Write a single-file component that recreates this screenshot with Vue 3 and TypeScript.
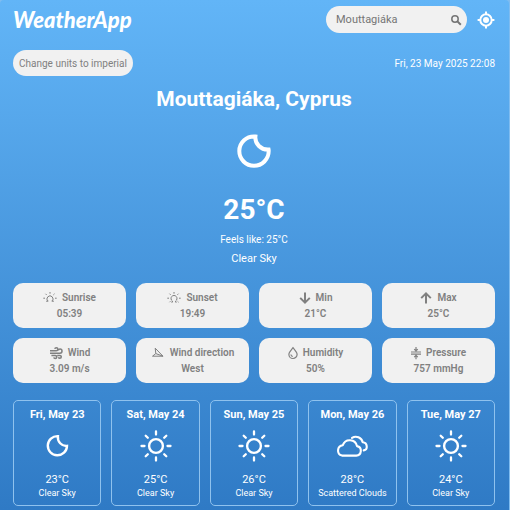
<script setup lang="ts">
import { ref } from 'vue'

type Glyph = 'sunrise' | 'sunset' | 'down' | 'up' | 'wind' | 'direction' | 'drop' | 'pressure'
type Sky = 'moon' | 'sun' | 'clouds'

interface Detail {
  icon: Glyph
  label: string
  value: string
}

interface Day {
  date: string
  sky: Sky
  temp: string
  text: string
}

const query = ref('Mouttagiáka')

const details: Detail[] = [
  { icon: 'sunrise', label: 'Sunrise', value: '05:39' },
  { icon: 'sunset', label: 'Sunset', value: '19:49' },
  { icon: 'down', label: 'Min', value: '21°C' },
  { icon: 'up', label: 'Max', value: '25°C' },
  { icon: 'wind', label: 'Wind', value: '3.09 m/s' },
  { icon: 'direction', label: 'Wind direction', value: 'West' },
  { icon: 'drop', label: 'Humidity', value: '50%' },
  { icon: 'pressure', label: 'Pressure', value: '757 mmHg' },
]

const days: Day[] = [
  { date: 'Fri, May 23', sky: 'moon', temp: '23°C', text: 'Clear Sky' },
  { date: 'Sat, May 24', sky: 'sun', temp: '25°C', text: 'Clear Sky' },
  { date: 'Sun, May 25', sky: 'sun', temp: '26°C', text: 'Clear Sky' },
  { date: 'Mon, May 26', sky: 'clouds', temp: '28°C', text: 'Scattered Clouds' },
  { date: 'Tue, May 27', sky: 'sun', temp: '24°C', text: 'Clear Sky' },
]
</script>

<template>
  <div class="app">
    <header class="top">
      <a class="logo" href="#">WeatherApp</a>
      <form class="search" role="search" @submit.prevent>
        <input v-model="query" type="text" aria-label="City" />
        <button type="submit" aria-label="Search">
          <svg viewBox="0 0 12 12" width="12" height="12" class="line">
            <circle cx="5" cy="5" r="3.2" stroke-width="1.5" />
            <path d="M7.4 7.4 10.8 10.8" stroke-width="2" />
          </svg>
        </button>
      </form>
      <button class="locate" type="button" aria-label="Use my location">
        <svg viewBox="0 0 18 18" width="18" height="18" class="line">
          <circle cx="9" cy="9" r="5.7" stroke-width="2" />
          <circle cx="9" cy="9" r="3" fill="currentColor" stroke="none" />
          <path d="M9 .6v3M9 14.4v3M.6 9h3M14.4 9h3" stroke-width="2" />
        </svg>
      </button>
    </header>

    <div class="bar">
      <button class="units" type="button">Change units to imperial</button>
      <time datetime="2025-05-23T22:08">Fri, 23 May 2025 22:08</time>
    </div>

    <main>
      <section class="current">
        <h1>Mouttagiáka, Cyprus</h1>
        <svg class="line now" viewBox="0 0 34 34" width="34" height="34">
          <path
            d="M18.4 2.5C9.6 1.7 2.3 8.4 2.3 17.1a14.7 14.7 0 0 0 29.4 0c0-.5 0-1-.1-1.5C24 16 17.7 10 18.4 2.5Z"
            stroke-width="4"
          />
        </svg>
        <p class="temp">25°C</p>
        <p class="feels">Feels like: 25°C</p>
        <p class="summary">Clear Sky</p>
      </section>

      <section class="details">
        <article v-for="item in details" :key="item.label" class="card">
          <h2>
            <svg v-if="item.icon === 'sunrise'" class="line" viewBox="0 0 14 14" width="14" height="14">
              <path d="M3.1 10.2h2a3 3 0 1 1 3.8 0h2M.3 7.2H2M12 7.2h1.7M7 1v1.7M2.5 2.8l1.1 1.1M11.5 2.8l-1.1 1.1" />
            </svg>
            <svg v-else-if="item.icon === 'sunset'" class="line" viewBox="0 0 14 14" width="14" height="14">
              <path d="M4.4 11.2h1V10a3 3 0 1 1 3.2 0v1.2h1M.3 7.2H2M12 7.2h1.7M7 1v1.7M2.5 2.7l1.1 1.1M11.5 2.7l-1.1 1.1M3.4 10.3l-.9.9M10.6 10.3l.9.9" />
            </svg>
            <svg v-else-if="item.icon === 'down'" class="line bold" viewBox="0 0 12 14" width="12" height="14">
              <path d="M6 1.5v10M1.2 6.9 6 11.7l4.8-4.8" />
            </svg>
            <svg v-else-if="item.icon === 'up'" class="line bold" viewBox="0 0 12 14" width="12" height="14">
              <path d="M6 12.5v-10M1.2 7.1 6 2.3l4.8 4.8" />
            </svg>
            <svg v-else-if="item.icon === 'wind'" class="line" viewBox="0 0 14 14" width="14" height="14">
              <path d="M1 4.8h6.3c2.1 0 2.1-3.1 0-3.1-.8 0-1.4.5-1.5 1.2M1 7.2h10c2.7 0 2.7-4.3 0-4.3-1 0-1.6.7-1.6 1.6M2.4 9.6h3.8c2 0 2 2.9 0 2.9-.8 0-1.3-.5-1.4-1.1M8.2 9.4h2.6c2 0 2 2.9 0 2.9-.7 0-1.2-.4-1.4-1" stroke-width="1.5" />
            </svg>
            <svg v-else-if="item.icon === 'direction'" class="line" viewBox="0 0 14 14" width="14" height="14">
              <path d="M4.2 2.2 12 10.2H1.5l3.3-2.6ZM4.8 7.6l7.2 2.6" />
            </svg>
            <svg v-else-if="item.icon === 'drop'" class="line" viewBox="0 0 10 14" width="10" height="14">
              <path d="M5 1.7C3.5 3.8.9 6.2.9 8.4a4.1 4.1 0 0 0 8.2 0C9.1 6.2 6.5 3.8 5 1.7ZM2.9 8.5c.1 1.1.8 1.8 1.9 2" stroke-width="1.2" />
            </svg>
            <svg v-else class="line" viewBox="0 0 10 14" width="10" height="14">
              <path d="M0 6h10M0 8.2h10M5 1v3.8M3.2 3.1 5 4.9l1.8-1.8M5 13.2V9.4M3.2 11.1 5 9.3l1.8 1.8" stroke-width="1.2" />
            </svg>
            {{ item.label }}
          </h2>
          <p>{{ item.value }}</p>
        </article>
      </section>

      <section class="forecast">
        <article v-for="day in days" :key="day.date" class="day">
          <h3>{{ day.date }}</h3>
          <svg v-if="day.sky === 'moon'" class="line" viewBox="0 0 34 34" width="34" height="34">
            <path
              d="M17.9 7.1a9.6 9.6 0 1 0 9.1 9.8c-5.4.5-9.8-4.2-9.1-9.8Z"
              stroke-width="2.4"
            />
          </svg>
          <svg v-else-if="day.sky === 'sun'" class="line round" viewBox="0 0 34 34" width="34" height="34">
            <circle cx="17" cy="17" r="6.9" stroke-width="2.4" />
            <path
              d="M17 2.5v3M17 28.5v3M2.5 17h3M28.5 17h3M6.7 6.7l2.1 2.1M25.2 25.2l2.1 2.1M6.7 27.3l2.1-2.1M25.2 8.8l2.1-2.1"
              stroke-width="2.3"
            />
          </svg>
          <svg v-else class="line round" viewBox="0 0 34 34" width="34" height="34">
            <path
              d="M7 26.6h14.2a4.8 4.8 0 0 0 .8-9.5 7.4 7.4 0 0 0-14.2-.9A5.3 5.3 0 0 0 7 26.6ZM17 8.9a7 7 0 0 1 10.7 4.3c4.8.3 5.6 7.3 1 8.2"
              stroke-width="2.1"
            />
          </svg>
          <p class="degrees">{{ day.temp }}</p>
          <p class="text">{{ day.text }}</p>
        </article>
      </section>
    </main>
  </div>
</template>

<style>
body {
  margin: 0;
  background: #7fbcf0;
}
</style>

<style scoped>
.app {
  box-sizing: border-box;
  min-height: 100vh;
  margin-right: 1px;
  padding: 6px 14px 4px 13px;
  border-radius: 4px 4px 0 0;
  background: linear-gradient(#62b5f7, #2f7ac5);
  color: #fff;
  font-family: Roboto, 'Liberation Sans', sans-serif;
}

h1,
h2,
h3,
p {
  margin: 0;
}

button,
input {
  padding: 0;
  border: 0;
  background: none;
  color: inherit;
  font: inherit;
}

svg {
  display: block;
}

.line {
  fill: none;
  stroke: currentColor;
  stroke-width: 1;
}

.bold {
  stroke-width: 2;
}

.round {
  stroke-linecap: round;
  stroke-linejoin: round;
}

.top {
  display: flex;
  align-items: center;
  height: 27px;
}

.logo {
  margin-right: auto;
  color: #fff;
  font: italic 900 22px/27px Lato, sans-serif;
  text-decoration: none;
}

.search {
  box-sizing: border-box;
  display: flex;
  align-items: center;
  width: 141px;
  height: 27px;
  padding: 0 5px 0 10px;
  border-radius: 14px;
  background: #f1f1f1;
  color: #757575;
  font-size: 11px;
}

.search input {
  flex: 1;
  min-width: 0;
  outline: 0;
}

.locate {
  margin-left: 10px;
}

.bar {
  display: flex;
  align-items: center;
  justify-content: space-between;
  margin-top: 17px;
  font-size: 10px;
}

.units {
  height: 26px;
  padding: 0 6px;
  border-radius: 13px;
  background: #f1f1f1;
  color: #808080;
}

.current {
  display: flex;
  flex-direction: column;
  align-items: center;
}

h1 {
  margin-top: 10px;
  font-size: 21px;
  line-height: 26px;
}

.now {
  margin-top: 22px;
}

.temp {
  margin-top: 24px;
  font-size: 28px;
  font-weight: 700;
  line-height: 36px;
}

.feels {
  margin-top: 5px;
  font-size: 10px;
  line-height: 14px;
}

.summary {
  margin-top: 5px;
  font-size: 11px;
  line-height: 14px;
}

.details {
  display: grid;
  grid-template-columns: repeat(4, 1fr);
  gap: 10px;
  margin-top: 17px;
}

.card {
  padding: 7px 0 6px;
  border-radius: 10px;
  background: #f1f1f1;
  color: #808080;
  font-size: 10px;
  font-weight: 600;
  line-height: 16px;
  text-align: center;
}

.card h2 {
  display: flex;
  align-items: center;
  justify-content: center;
  gap: 5px;
  font: inherit;
}

.forecast {
  display: grid;
  grid-template-columns: repeat(5, 1fr);
  gap: 10px;
  margin-top: 17px;
}

.day {
  display: flex;
  flex-direction: column;
  align-items: center;
  padding: 7px 0 5px;
  border: 1px solid #8fc2ee;
  border-radius: 5px;
}

.day h3 {
  margin-bottom: 7px;
  font-size: 11px;
  line-height: 14px;
}

.degrees {
  margin-top: 10px;
  font-size: 11px;
  line-height: 14px;
}

.text {
  font-size: 9px;
  line-height: 13px;
}
</style>
